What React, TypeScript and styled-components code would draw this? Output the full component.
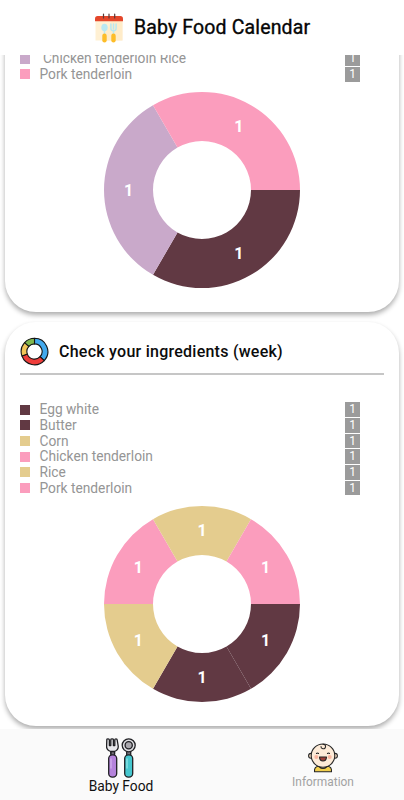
import React from 'react';
import styled, { createGlobalStyle } from 'styled-components';

const GlobalStyle = createGlobalStyle`
  * { box-sizing: border-box; }
  body { margin: 0; background: #fff; font-family: Roboto, sans-serif; }
`;

const Screen = styled.div`
  display: flex;
  flex-direction: column;
  width: 404px;
  height: 800px;
  overflow: hidden;
  background: #fff;
`;

const Header = styled.header`
  display: flex;
  align-items: center;
  gap: 9px;
  flex: none;
  height: 55px;
  padding: 1px 0 0 94px;
`;

const AppTitle = styled.h1`
  margin: 0;
  font-size: 19.5px;
  font-weight: 400;
  line-height: 24px;
  letter-spacing: 0.14px;
  white-space: nowrap;
  color: #060606;
  -webkit-text-stroke: 0.35px #060606;
`;

const Feed = styled.main`
  display: flex;
  flex-direction: column;
  justify-content: flex-end;
  gap: 10px;
  height: 674px;
  padding: 0 5px 3px;
  overflow: hidden;
`;

const Card = styled.section`
  flex: none;
  padding: 0 15px 24px;
  border-radius: 31px;
  background: #fff;
  box-shadow: 0 3px 5px rgba(0, 0, 0, 0.32);
`;

const CardHeading = styled.div`
  display: flex;
  align-items: center;
  gap: 10px;
  height: 53px;
  padding-top: 7px;
  border-bottom: 2px solid #c6c6c6;
`;

const CardTitle = styled.h2`
  margin: 0;
  font-size: 16px;
  font-weight: 500;
  letter-spacing: 0.25px;
  white-space: nowrap;
  color: #0c0c0c;
`;

const Legend = styled.ul<{ $top: number }>`
  margin: 0;
  padding: ${(p) => p.$top}px 24px 10px 0;
  list-style: none;
`;

const LegendRow = styled.li`
  display: flex;
  align-items: center;
  height: 15.7px;
  font-size: 13.75px;
  line-height: 15.7px;
  color: #959595;
`;

const Swatch = styled.span<{ $color: string }>`
  width: 10px;
  height: 10px;
  margin-right: 9.5px;
  background: ${(p) => p.$color};
`;

const LegendLabel = styled.span`
  flex: 1;
  padding-top: 1px;
  white-space: pre;
`;

const Count = styled.span`
  width: 15px;
  height: 14.6px;
  font-size: 12px;
  line-height: 14.6px;
  text-align: center;
  color: #fff;
  background: #9b9b9b;
`;

const Chart = styled.svg`
  display: block;
  width: 196px;
  height: 196px;
  margin: 0 auto;
`;

const SliceLabel = styled.text`
  font: 700 16px Roboto, sans-serif;
  fill: #fff;
  text-anchor: middle;
`;

const TabBar = styled.nav`
  display: grid;
  grid-template-columns: 1fr 1fr;
  flex: none;
  height: 71px;
  background: #fafafa;
`;

const Tab = styled.div<{ $active?: boolean }>`
  display: flex;
  flex-direction: column;
  align-items: center;
  padding-top: ${(p) => (p.$active ? 9 : 14)}px;
  padding-left: 40px;
  font-size: ${(p) => (p.$active ? 13.8 : 11.9)}px;
  line-height: 16px;
  color: ${(p) => (p.$active ? '#111' : '#a2a2a2')};
`;

const TabLabel = styled.span<{ $active?: boolean }>`
  margin-top: ${(p) => (p.$active ? 0 : 1)}px;
`;

const Icon = styled.svg`
  display: block;
  flex: none;
`;

const PLUM = '#613943';
const PINK = '#fb9dbd';
const SAND = '#e4cc8e';
const LILAC = '#c9a9ca';

type Item = { name: string; color: string };

const menus: Item[] = [
  { name: ' Chicken tenderloin Rice', color: LILAC },
  { name: 'Pork tenderloin', color: PINK },
];

const ingredients: Item[] = [
  { name: 'Egg white', color: PLUM },
  { name: 'Butter', color: PLUM },
  { name: 'Corn', color: SAND },
  { name: 'Chicken tenderloin', color: PINK },
  { name: 'Rice', color: SAND },
  { name: 'Pork tenderloin', color: PINK },
];

const polar = (c: number, r: number, a: number) => `${c + r * Math.cos(a)} ${c + r * Math.sin(a)}`;

function ring(c: number, outer: number, inner: number, a0: number, a1: number) {
  return `M${polar(c, outer, a0)}A${outer} ${outer} 0 0 1 ${polar(c, outer, a1)}L${polar(c, inner, a1)}A${inner} ${inner} 0 0 0 ${polar(c, inner, a0)}Z`;
}

function Donut({ colors }: { colors: string[] }) {
  const step = (Math.PI * 2) / colors.length;
  return (
    <Chart viewBox="0 0 196 196">
      {colors.map((color, i) => {
        const mid = (i + 0.5) * step;
        return (
          <g key={i}>
            <path d={ring(98, 98, 49, i * step, (i + 1) * step)} fill={color} />
            <SliceLabel x={98 + 73.5 * Math.cos(mid)} y={98 + 73.5 * Math.sin(mid) + 5.7}>1</SliceLabel>
          </g>
        );
      })}
    </Chart>
  );
}

function LegendList({ items, top }: { items: Item[]; top: number }) {
  return (
    <Legend $top={top}>
      {items.map((item) => (
        <LegendRow key={item.name}>
          <Swatch $color={item.color} />
          <LegendLabel>{item.name}</LegendLabel>
          <Count>1</Count>
        </LegendRow>
      ))}
    </Legend>
  );
}

function CalendarIcon() {
  return (
    <Icon width="31" height="31" viewBox="0 0 31 31">
      <path d="M1.500 7h27v20.500h-27z" fill="#fff0d3" />
      <path d="M18 7h10.500v20.500H8z" fill="#ffe9c4" opacity=".7" />
      <path d="M1 8.200V5.700Q1 3 3.700 3h22.600Q29 3 29 5.700v2.500z" fill="#e4472b" />
      <path d="M9.500 1v4M15 1v4M20.700 1v4" stroke="#5b3a38" strokeWidth="1.200" strokeLinecap="round" />
      <ellipse cx="10.500" cy="14.500" rx="3.200" ry="3.800" fill="#b9e8f2" />
      <path d="M10.500 17v5M19.500 17v5" stroke="#b9e8f2" strokeWidth="1.500" />
      <path d="M16.900 11v4.500q0 2.300 2.600 2.300t2.600-2.300V11M19.500 11v5" fill="none" stroke="#b9e8f2" strokeWidth="1.500" strokeLinecap="round" />
      <rect x="8.300" y="20.500" width="4.400" height="9" rx="2.200" fill="#fdbd28" />
      <rect x="17.300" y="20.500" width="4.400" height="9" rx="2.200" fill="#fdbd28" />
    </Icon>
  );
}

function WheelIcon() {
  const parts: [number, number, string][] = [
    [-90, 43, '#42a9ed'],
    [43, 160, '#ef3d3b'],
    [160, 222, '#f2c659'],
    [222, 270, '#80b84f'],
  ];
  return (
    <Icon width="29" height="29" viewBox="0 0 29 29">
      {parts.map(([a, b, color]) => (
        <path
          key={color}
          d={ring(14.5, 13.3, 7.6, (a * Math.PI) / 180, (b * Math.PI) / 180)}
          fill={color}
          stroke="#151515"
          strokeWidth="1.1"
          strokeLinejoin="round"
        />
      ))}
    </Icon>
  );
}

function CutleryIcon() {
  return (
    <Icon width="30" height="40" viewBox="0 0 30 40" stroke="#202024" strokeWidth="1.3" strokeLinejoin="round" strokeLinecap="round">
      <path d="M.8 2q0-1.200 1.300-1.200T3.400 2v5.500h1.400V2q0-1.200 1.300-1.200T7.400 2v5.500h1.400V2q0-1.200 1.200-1.200T11.200 2l1 6q.5 4-3.700 5.500V16H4.800v-2.500Q.3 12 .6 8z" fill="#e8e8ec" />
      <path d="M5 13.500h3.500V18H5z" fill="#747078" />
      <rect x="2.700" y="16.800" width="8" height="22.300" rx="3.700" fill="#b583dc" />
      <path d="M5 21v9" stroke="#d3b0ed" fill="none" />
      <path d="M20.700 13h4v5h-4z" fill="#747078" />
      <circle cx="22.700" cy="7.300" r="6.500" fill="#dedee2" />
      <circle cx="22.700" cy="7.300" r="3.600" fill="#aaa8ae" />
      <rect x="18.700" y="16.800" width="8" height="22.300" rx="3.700" fill="#45c6ce" />
      <path d="M21 21v9" stroke="#8fe5e7" fill="none" />
    </Icon>
  );
}

function BabyIcon() {
  return (
    <Icon width="30" height="30" viewBox="0 0 30 30" stroke="#252525" strokeWidth="1.1" strokeLinecap="round" strokeLinejoin="round">
      <path d="M6.500 28.800q-.5-5.500 4.500-5.500h8q5 0 4.500 5.500z" fill="#f2cf4d" />
      <path d="M11 23.500q4 4 8 0" fill="#fce2c8" />
      <circle cx="3" cy="12.800" r="2.400" fill="#fce2c8" />
      <circle cx="27" cy="12.800" r="2.400" fill="#fce2c8" />
      <ellipse cx="15" cy="12.600" rx="11.800" ry="11.600" fill="#fdebd8" />
      <path d="M15 1.200q3 .3 2.500 2.700t-2.600 1.800-1.900-2.100" fill="none" />
      <circle cx="8.300" cy="14" r="2" fill="#f9b59f" stroke="none" />
      <circle cx="21.700" cy="14" r="2" fill="#f9b59f" stroke="none" />
      <path d="M8.500 10.500q1-1 2 0M19.500 10.500q1-1 2 0" fill="none" />
      <path d="M11.500 14h7q-.2 4-3.500 4t-3.500-4z" fill="#9e4038" />
    </Icon>
  );
}

export default function App() {
  return (
    <>
      <GlobalStyle />
      <Screen>
        <Header>
          <CalendarIcon />
          <AppTitle>Baby Food Calendar</AppTitle>
        </Header>
        <Feed>
          <Card>
            <LegendList items={menus} top={50} />
            <Donut colors={[PLUM, LILAC, PINK]} />
          </Card>
          <Card>
            <CardHeading>
              <WheelIcon />
              <CardTitle>Check your ingredients (week)</CardTitle>
            </CardHeading>
            <LegendList items={ingredients} top={26.8} />
            <Donut colors={ingredients.map((item) => item.color)} />
          </Card>
        </Feed>
        <TabBar>
          <Tab $active>
            <CutleryIcon />
            <TabLabel $active>Baby Food</TabLabel>
          </Tab>
          <Tab>
            <BabyIcon />
            <TabLabel>Information</TabLabel>
          </Tab>
        </TabBar>
      </Screen>
    </>
  );
}
